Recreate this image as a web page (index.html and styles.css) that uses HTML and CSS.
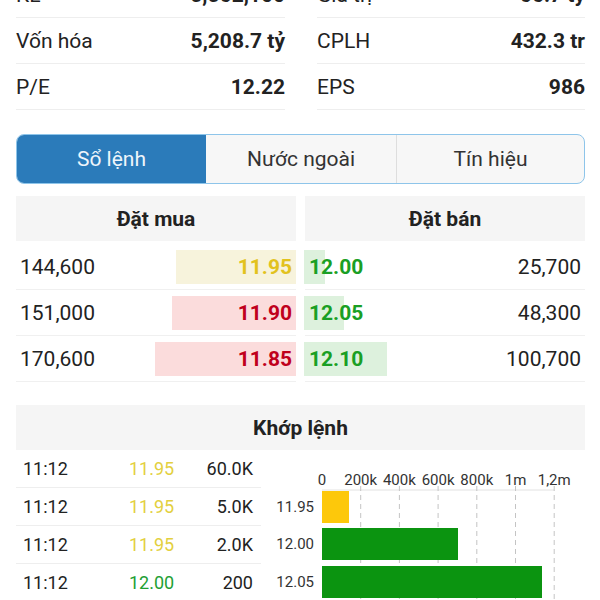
FILE: index.html
```html
<!DOCTYPE html>
<html lang="vi">
  <head>
    <meta charset="UTF-8" />
    <meta name="viewport" content="width=device-width, initial-scale=1.0" />
    <title>Sổ lệnh</title>
    <link rel="stylesheet" href="styles.css">
  </head>
  <body>
    <div class="page">
      <!-- Thông tin cơ bản -->
      <div class="stats">
        <div class="stat-col">
          <div class="stat"><span>KL</span><b>5,562,100</b></div>
          <div class="stat"><span>Vốn hóa</span><b>5,208.7 tỷ</b></div>
          <div class="stat"><span>P/E</span><b>12.22</b></div>
        </div>
        <div class="stat-col">
          <div class="stat"><span>Giá trị</span><b>66.7 tỷ</b></div>
          <div class="stat"><span>CPLH</span><b>432.3 tr</b></div>
          <div class="stat"><span>EPS</span><b>986</b></div>
        </div>
      </div>

      <div class="tabs">
        <div class="tab active">Sổ lệnh</div>
        <div class="tab">Nước ngoài</div>
        <div class="tab">Tín hiệu</div>
      </div>

      <!-- Sổ lệnh -->
      <div class="book">
        <div class="side buy">
          <div class="side-head">Đặt mua</div>
          <div class="book-row">
            <span class="bar bar-ref" style="width: 120px"></span>
            <span class="qty">144,600</span><b class="price ref">11.95</b>
          </div>
          <div class="book-row">
            <span class="bar bar-down" style="width: 124px"></span>
            <span class="qty">151,000</span><b class="price down">11.90</b>
          </div>
          <div class="book-row">
            <span class="bar bar-down" style="width: 141px"></span>
            <span class="qty">170,600</span><b class="price down">11.85</b>
          </div>
        </div>
        <div class="side sell">
          <div class="side-head">Đặt bán</div>
          <div class="book-row">
            <span class="bar bar-up" style="width: 21px"></span>
            <b class="price up">12.00</b><span class="qty">25,700</span>
          </div>
          <div class="book-row">
            <span class="bar bar-up" style="width: 40px"></span>
            <b class="price up">12.05</b><span class="qty">48,300</span>
          </div>
          <div class="book-row">
            <span class="bar bar-up" style="width: 83px"></span>
            <b class="price up">12.10</b><span class="qty">100,700</span>
          </div>
        </div>
      </div>

      <!-- Khớp lệnh -->
      <div class="match">
        <div class="match-head">Khớp lệnh</div>
        <div class="match-body">
          <div class="match-list">
            <div class="match-row"><span>11:12</span><span class="ref">11.95</span><span class="vol">60.0K</span></div>
            <div class="match-row"><span>11:12</span><span class="ref">11.95</span><span class="vol">5.0K</span></div>
            <div class="match-row"><span>11:12</span><span class="ref">11.95</span><span class="vol">2.0K</span></div>
            <div class="match-row"><span>11:12</span><span class="up">12.00</span><span class="vol">200</span></div>
          </div>
          <svg class="chart" width="324" height="152" viewBox="0 0 324 152">
            <line x1="61" y1="40" x2="293" y2="40" stroke="#e2e2e2" />
            <g stroke="#c4c4c4" stroke-dasharray="5 4">
              <line x1="99.7" y1="36" x2="99.7" y2="152" />
              <line x1="138.4" y1="36" x2="138.4" y2="152" />
              <line x1="177.1" y1="36" x2="177.1" y2="152" />
              <line x1="215.8" y1="36" x2="215.8" y2="152" />
              <line x1="254.5" y1="36" x2="254.5" y2="152" />
              <line x1="293.2" y1="36" x2="293.2" y2="152" />
            </g>
            <g class="axis" text-anchor="middle">
              <text x="61" y="35">0</text>
              <text x="99.7" y="35">200k</text>
              <text x="138.4" y="35">400k</text>
              <text x="177.1" y="35">600k</text>
              <text x="215.8" y="35">800k</text>
              <text x="254.5" y="35">1m</text>
              <text x="293.2" y="35">1,2m</text>
            </g>
            <g class="axis" text-anchor="end">
              <text x="53" y="62">11.95</text>
              <text x="53" y="99">12.00</text>
              <text x="53" y="137">12.05</text>
            </g>
            <rect x="61" y="41" width="27" height="32" fill="#fdc80b" />
            <rect x="61" y="78" width="136" height="32" fill="#0b9410" />
            <rect x="61" y="116" width="220" height="32" fill="#0b9410" />
          </svg>
        </div>
      </div>
    </div>
  </body>
</html>
```

FILE: styles.css
```css
* {
  margin: 0;
  padding: 0;
  box-sizing: border-box;
  font-family: Roboto, "Noto Sans", sans-serif;
}

body {
  background-color: #fff;
  color: #222;
  width: 600px;
  height: 600px;
  overflow: hidden;
}

.page {
  padding: 0 15px 0 16px;
}

/* Thông tin cơ bản */
.stats {
  display: grid;
  grid-template-columns: 269px 268px;
  column-gap: 32px;
  margin-top: -28px;
}

.stat {
  display: flex;
  justify-content: space-between;
  align-items: center;
  height: 46px;
  border-bottom: 1px solid #eee;
  font-size: 21px;
}

.stat b {
  font-weight: bold;
}

/* Tabs */
.tabs {
  display: grid;
  grid-template-columns: 189px 190px 1fr;
  height: 50px;
  margin-top: 24px;
  border: 1px solid #8ec5ea;
  border-radius: 8px;
  overflow: hidden;
  background: #f7f7f7;
}

.tab {
  display: flex;
  justify-content: center;
  align-items: center;
  font-size: 21px;
  color: #333;
}

.tab + .tab {
  border-left: 1px solid #dedede;
}

.tab.active {
  background: #2b7bba;
  color: #eef5fb;
}

.tab.active + .tab {
  border-left: none;
}

/* Sổ lệnh */
.book {
  display: grid;
  grid-template-columns: 280px 280px;
  column-gap: 9px;
  margin-top: 12px;
}

.side-head {
  height: 45px;
  margin-bottom: 3px;
  background: #f5f5f5;
  display: flex;
  justify-content: center;
  align-items: center;
  font-size: 21px;
  font-weight: bold;
}

.book-row {
  position: relative;
  display: flex;
  justify-content: space-between;
  align-items: center;
  height: 46px;
  padding: 0 4px;
  border-bottom: 1px solid #f0f0f0;
  font-size: 21px;
}

.book-row .qty,
.book-row .price {
  position: relative;
}

.book-row .price {
  font-weight: bold;
}

.bar {
  position: absolute;
  top: 6px;
  bottom: 5px;
}

.buy .bar {
  right: 0;
}

.sell .bar {
  left: -1px;
}

.bar-ref {
  background: #f7f3dc;
}

.bar-down {
  background: #fbdcdc;
}

.bar-up {
  background: #ddf1dd;
}

.ref {
  color: #e2c21e;
}

.down {
  color: #c0001c;
}

.up {
  color: #1a9f24;
}

/* Khớp lệnh */
.match {
  margin-top: 23px;
}

.match-head {
  height: 45px;
  background: #f5f5f5;
  display: flex;
  justify-content: center;
  align-items: center;
  font-size: 21px;
  font-weight: bold;
}

.match-body {
  display: flex;
}

.match-list {
  width: 245px;
}

.match-row {
  display: grid;
  grid-template-columns: 106px 1fr auto;
  align-items: center;
  height: 38px;
  padding: 0 8px 0 7px;
  border-bottom: 1px solid #eee;
  font-size: 18px;
}

.match-row .ref {
  color: #e3d040;
}

.match-row .up {
  color: #22a033;
}

.chart {
  display: block;
  flex: none;
}

.chart .axis {
  font-size: 15px;
  fill: #333;
}
```
